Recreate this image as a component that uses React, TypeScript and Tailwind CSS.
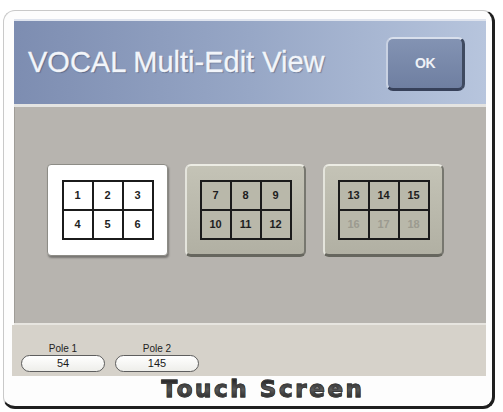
import React from "react";

const sans = { fontFamily: '"Liberation Sans", Arial, sans-serif' };

type Cell = { n: number; dim?: boolean };

function Grid({ cells, light }: { cells: Cell[]; light?: boolean }) {
  return (
    <div className="grid grid-cols-[28px_28px_28px] grid-rows-[27px_27px] gap-[2px] p-[2px] bg-[#1b1b1b]">
      {cells.map((c) => (
        <div
          key={c.n}
          className={`flex items-center justify-center text-[11px] font-bold ${
            light ? "bg-white" : "bg-[#b9b8aa]"
          } ${c.dim ? "text-[#9c9b90]" : "text-[#1e1e1e]"}`}
          style={sans}
        >
          {c.n}
        </div>
      ))}
    </div>
  );
}

function Panel({ cells, selected }: { cells: Cell[]; selected?: boolean }) {
  if (selected) {
    return (
      <div className="w-[121px] h-[92px] flex items-center justify-center rounded-[4px] bg-white border border-[#8d8c86] shadow-[1px_2px_2px_rgba(0,0,0,0.35)]">
        <Grid cells={cells} light />
      </div>
    );
  }
  return (
    <div className="w-[121px] h-[93px] flex items-center justify-center rounded-[6px] bg-gradient-to-b from-[#c4c3b6] to-[#b1b0a3] border-t-2 border-l-2 border-r-2 border-b-[3px] border-t-[#ecece4] border-l-[#e4e4dc] border-r-[#77776f] border-b-[#66665e]">
      <Grid cells={cells} />
    </div>
  );
}

function Pole({ label, value }: { label: string; value: string }) {
  return (
    <div className="flex flex-col items-center w-[84px]" style={sans}>
      <div className="text-[10px] leading-[12px] text-[#222]">{label}</div>
      <div className="w-[84px] h-[17px] rounded-full border border-[#5e5e5e] bg-gradient-to-b from-[#ffffff] to-[#eeeeea] flex items-center justify-center text-[11px] leading-none text-[#1a1a1a]">
        {value}
      </div>
    </div>
  );
}

export default function App() {
  return (
    <div className="w-[503px] h-[412px] bg-white overflow-hidden">
      <div className="ml-[3px] mt-[10px] w-[492px] h-[399px] rounded-[12px] bg-[#fdfdfd] border-t border-l border-t-[#c9c9c9] border-l-[#c9c9c9] border-r-[3px] border-b-[3px] border-r-[#1f1f1f] border-b-[#1f1f1f] pt-[8px] pl-[8px] pr-[6px] flex flex-col">
        {/* title bar */}
        <div className="ml-[2px] h-[85px] flex justify-between bg-gradient-to-r from-[#7d8db1] via-[#97a7c6] to-[#b7c5dd] border-t-2 border-t-[#dfe4ee]">
          <div
            className="self-center pl-[14px] text-[29px] leading-none text-[#f2f5fa] [text-shadow:1px_1px_1px_rgba(40,50,80,0.45)] [-webkit-text-stroke:0.3px_#f2f5fa]"
            style={sans}
          >
            VOCAL Multi-Edit View
          </div>
          <div className="mt-[16px] mr-[21px] w-[79px] h-[54px] rounded-[7px] bg-gradient-to-b from-[#8393b3] to-[#6f7fa1] border-t-2 border-l-2 border-t-[#d8dfec] border-l-[#c9d2e3] border-r-[3px] border-b-[3px] border-r-[#3f4a60] border-b-[#37415a] flex items-center justify-center">
            <span className="text-[14px] font-bold text-[#eef1f6] tracking-[-0.5px]" style={sans}>
              OK
            </span>
          </div>
        </div>
        {/* separator */}
        <div className="ml-[2px] h-[3px] bg-[#e4e4e2]" />
        {/* content */}
        <div className="ml-[2px] h-[216px] bg-[#b7b4af] border-l border-l-[#9f9c97] flex gap-[17px] pt-[57px] pl-[32px]">
          <Panel
            selected
            cells={[{ n: 1 }, { n: 2 }, { n: 3 }, { n: 4 }, { n: 5 }, { n: 6 }]}
          />
          <Panel cells={[{ n: 7 }, { n: 8 }, { n: 9 }, { n: 10 }, { n: 11 }, { n: 12 }]} />
          <Panel
            cells={[
              { n: 13 },
              { n: 14 },
              { n: 15 },
              { n: 16, dim: true },
              { n: 17, dim: true },
              { n: 18, dim: true },
            ]}
          />
        </div>
        <div className="ml-[2px] h-[2px] bg-[#e7e5e0]" />
        {/* status strip */}
        <div className="h-[51px] bg-[#d6d2ca] flex items-end gap-[10px] pl-[9px] pb-[4px]">
          <Pole label="Pole 1" value="54" />
          <Pole label="Pole 2" value="145" />
        </div>
        {/* caption */}
        <div className="flex-1 flex items-center justify-center pl-[28px] pb-[3px]">
          <span
            className="text-[23px] leading-none font-bold tracking-[2.6px] bg-gradient-to-b from-[#1c1c1c] via-[#595959] to-[#1c1c1c] bg-clip-text text-transparent [-webkit-text-stroke:0.9px_#3a3a3a]"
            style={{ fontFamily: '"DejaVu Sans", Verdana, sans-serif' }}
          >
            Touch Screen
          </span>
        </div>
      </div>
    </div>
  );
}
